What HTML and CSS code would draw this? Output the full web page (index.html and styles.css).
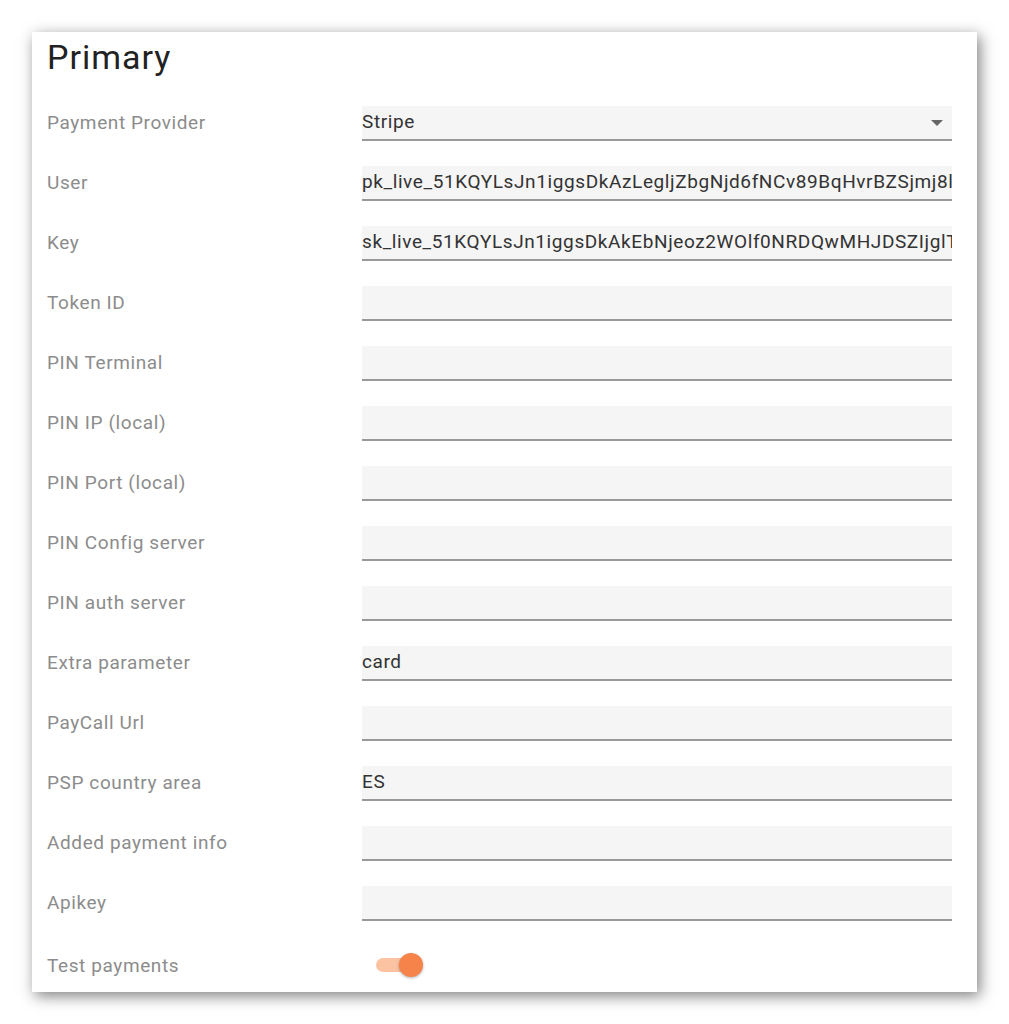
FILE: index.html
```html
<!DOCTYPE html>
<html lang="en">
<head>
    <meta charset="UTF-8">
    <meta name="viewport" content="width=device-width, initial-scale=1.0">
    <title>Payment Settings</title>
    <link rel="stylesheet" href="styles.css">
</head>
<body>
    <div class="card">
        <h1 class="card-title">Primary</h1>

        <div class="row">
            <label class="row-label">Payment Provider</label>
            <div class="field select">
                <span>Stripe</span>
                <span class="arrow"></span>
            </div>
        </div>
        <div class="row">
            <label class="row-label">User</label>
            <input class="field" type="text" value="pk_live_51KQYLsJn1iggsDkAzLegljZbgNjd6fNCv89BqHvrBZSjmj8lRtWxq2LmNop">
        </div>
        <div class="row">
            <label class="row-label">Key</label>
            <input class="field" type="text" value="sk_live_51KQYLsJn1iggsDkAkEbNjeoz2WOlf0NRDQwMHJDSZIjglTfReA9kLmZq">
        </div>
        <div class="row">
            <label class="row-label">Token ID</label>
            <input class="field" type="text" value="">
        </div>
        <div class="row">
            <label class="row-label">PIN Terminal</label>
            <input class="field" type="text" value="">
        </div>
        <div class="row">
            <label class="row-label">PIN IP (local)</label>
            <input class="field" type="text" value="">
        </div>
        <div class="row">
            <label class="row-label">PIN Port (local)</label>
            <input class="field" type="text" value="">
        </div>
        <div class="row">
            <label class="row-label">PIN Config server</label>
            <input class="field" type="text" value="">
        </div>
        <div class="row">
            <label class="row-label">PIN auth server</label>
            <input class="field" type="text" value="">
        </div>
        <div class="row">
            <label class="row-label">Extra parameter</label>
            <input class="field" type="text" value="card">
        </div>
        <div class="row">
            <label class="row-label">PayCall Url</label>
            <input class="field" type="text" value="">
        </div>
        <div class="row">
            <label class="row-label">PSP country area</label>
            <input class="field" type="text" value="ES">
        </div>
        <div class="row">
            <label class="row-label">Added payment info</label>
            <input class="field" type="text" value="">
        </div>
        <div class="row">
            <label class="row-label">Apikey</label>
            <input class="field" type="text" value="">
        </div>
        <div class="row toggle-row">
            <label class="row-label">Test payments</label>
            <div class="toggle">
                <span class="toggle-track"></span>
                <span class="toggle-knob"></span>
            </div>
        </div>
    </div>
</body>
</html>
```

FILE: styles.css
```css
* {
  margin: 0;
  padding: 0;
  box-sizing: border-box;
}

body {
  font-family: Roboto, "Noto Sans", sans-serif;
  background-color: #fff;
  padding: 32px;
}

.card {
  width: 945px;
  height: 960px;
  background-color: #fff;
  padding: 5px 25px 0 15px;
  box-shadow: 3px 4px 14px rgba(0, 0, 0, 0.5);
}

.card-title {
  font-size: 34px;
  font-weight: 400;
  letter-spacing: 1px;
  line-height: 40px;
  color: #222;
  margin-bottom: 19px;
}

.row {
  display: flex;
  align-items: center;
  padding: 10px 0 15px;
}

.row-label {
  width: 315px;
  flex-shrink: 0;
  padding-bottom: 3px;
  font-size: 19px;
  letter-spacing: 0.6px;
  color: #8c8c8c;
}

.field {
  flex: 1;
  min-width: 0;
  height: 35px;
  border: none;
  border-bottom: 2px solid #999;
  background-color: #f5f5f5;
  font-family: inherit;
  font-size: 19px;
  letter-spacing: 0.6px;
  color: #333;
  padding: 0 0 3px;
  outline: none;
}

.select {
  display: flex;
  align-items: center;
  justify-content: space-between;
  padding-right: 9px;
}

.arrow {
  width: 0;
  height: 0;
  margin-top: 3px;
  border-left: 6px solid transparent;
  border-right: 6px solid transparent;
  border-top: 6px solid #666;
}

.toggle-row {
  padding-top: 17px;
}

.toggle-row .row-label {
  padding-bottom: 0;
}

.toggle {
  position: relative;
  width: 50px;
  height: 24px;
  margin-left: 14px;
}

.toggle-track {
  position: absolute;
  left: 0;
  top: 5px;
  width: 44px;
  height: 14px;
  border-radius: 7px;
  background-color: #fbc3a2;
}

.toggle-knob {
  position: absolute;
  left: 23px;
  top: 0;
  width: 24px;
  height: 24px;
  border-radius: 50%;
  background-color: #f5834a;
  box-shadow: 0 1px 3px rgba(0, 0, 0, 0.3);
}
```
